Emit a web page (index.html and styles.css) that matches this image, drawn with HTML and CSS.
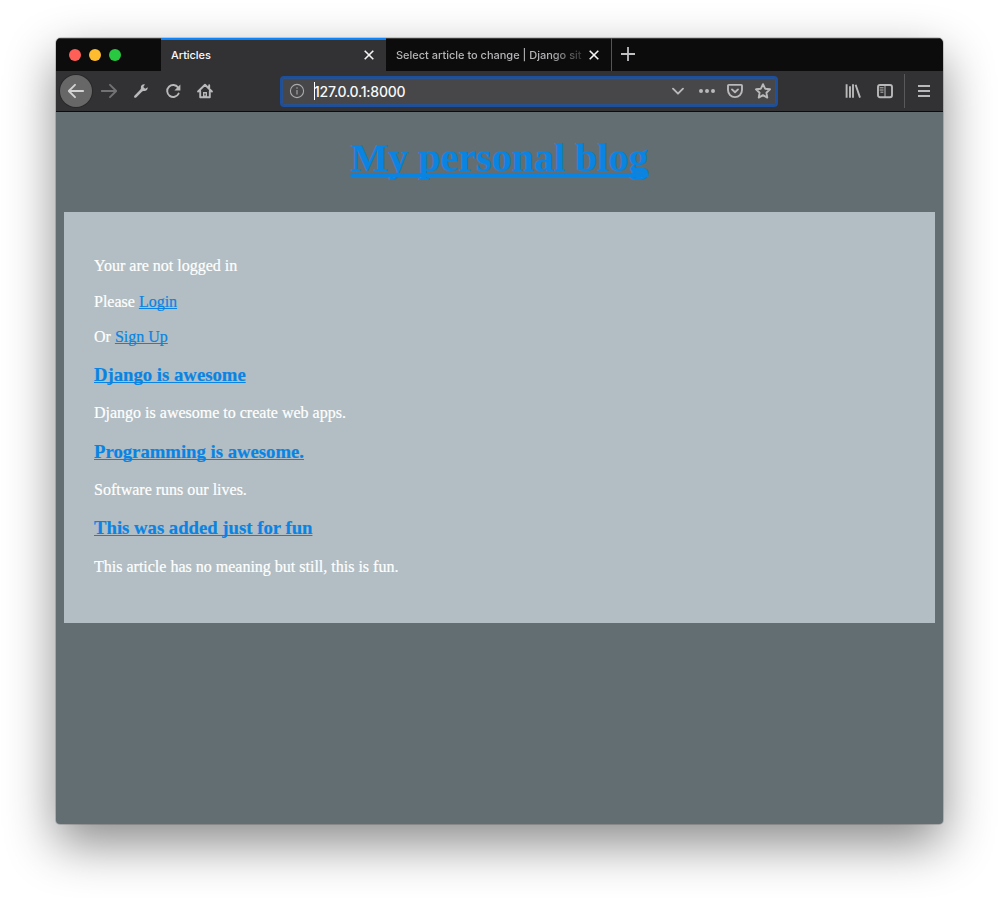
FILE: index.html
```html
<!DOCTYPE html>
<html lang="en">
<head>
<meta charset="utf-8">
<title>Articles</title>
<link rel="stylesheet" href="styles.css">
</head>
<body>
<div class="window">
  <div class="tabbar">
    <div class="lights"><i class="red"></i><i class="yellow"></i><i class="green"></i></div>
    <div class="tab active"><span class="label">Articles</span><svg class="close" viewBox="0 0 10 10"><path d="M.7.7l8.6 8.6M9.3.7L.7 9.3"/></svg></div>
    <div class="tab"><span class="label faded">Select article to change | Django sit</span><svg class="close" viewBox="0 0 10 10"><path d="M.7.7l8.6 8.6M9.3.7L.7 9.3"/></svg></div>
    <svg class="plus" viewBox="0 0 14 14"><path d="M7 0v14M0 7h14"/></svg>
  </div>
  <div class="toolbar">
    <div class="back"><svg class="icon" viewBox="0 0 16 16"><path d="M15.200 8H1M7 1.800L.8 8 7 14.200"/></svg></div>
    <svg class="icon forward" viewBox="0 0 16 16"><path d="M.6 8h14.600M9 1.800L15.200 8 9 14.200"/></svg>
    <svg class="icon" viewBox="0 0 16 16"><path class="solid" d="M14.700 4.200l-2.500 1.600-1.900-1.700L11.900 1.400C9.500.900 7.500 2.700 7.900 5.100c.1.700-.1 1.100-.5 1.500L1.400 12.700c-1.100 1.200.6 2.900 1.800 1.800L9.200 8.500c.4-.4.900-.6 1.500-.5 2.400.4 4.300-1.400 4-3.800z"/></svg>
    <svg class="icon" viewBox="0 0 16 16"><path d="M13.100 4.500A6 6 0 1 0 13.600 10.600"/><path class="solid" d="M15.400 1.500v6H9.400z"/></svg>
    <svg class="icon" viewBox="0 0 16 16"><path d="M1.100 8.500L8 1.700l6.900 6.800M3.200 8v6.300h9.600V8M12.200 2.300v2.500"/><path class="solid" d="M6 9h4v5.500H6z"/><path class="hole" d="M8 10.500v2"/></svg>
    <div class="url">
      <svg class="info" viewBox="0 0 16 16"><circle cx="8" cy="8" r="6.600"/><path d="M8 7v4.500M8 4.300v1.500"/></svg>
      <span class="address">127.0.0.1:8000</span>
      <svg class="icon chevron" viewBox="0 0 16 16"><path d="M3 5.700L8 10.700l5-5"/></svg>
      <svg class="icon dots" viewBox="0 0 16 16"><path class="solid" d="M0 8a2 2 0 1 0 4 0 2 2 0 0 0-4 0m6 0a2 2 0 1 0 4 0 2 2 0 0 0-4 0m6 0a2 2 0 1 0 4 0 2 2 0 0 0-4 0"/></svg>
      <svg class="icon" viewBox="0 0 16 16"><path d="M1.800 1.900h12.400q.8 0 .8.800v4.400a7 7 0 0 1-14 0V2.700q0-.8.800-.8zM5 6.400L8 9.300l3-2.900"/></svg>
      <svg class="icon" viewBox="0 0 16 16"><path d="M8 1.200l2.100 4.500 4.900.6-3.600 3.400.9 4.900L8 12.200l-4.300 2.400.9-4.900L1 6.300l4.900-.6z"/></svg>
    </div>
    <svg class="icon library" viewBox="0 0 16 16"><path d="M1.600 1.200v13.600M5 3.200v11.600M8 1.200v13.600M10.600 1.800L15 14.600"/></svg>
    <svg class="icon" viewBox="0 0 16 16"><rect x="1" y="2" width="14" height="12.200" rx="2"/><path class="thin" d="M8 2v12.200M3 4.800h3.200M3 7h3.200M3.800 9.200H6"/></svg>
    <div class="rule"></div>
    <svg class="icon menu" viewBox="0 0 16 16"><path d="M2 3h12M2 8h12M2 13h12"/></svg>
  </div>
  <main class="page">
    <h1><a href="#">My personal blog</a></h1>
    <div class="content">
      <p>Your are not logged in</p>
      <p>Please <a href="#">Login</a></p>
      <p>Or <a href="#">Sign Up</a></p>
      <h3><a href="#">Django is awesome</a></h3>
      <p>Django is awesome to create web apps.</p>
      <h3><a href="#">Programming is awesome.</a></h3>
      <p>Software runs our lives.</p>
      <h3><a href="#">This was added just for fun</a></h3>
      <p>This article has no meaning but still, this is fun.</p>
    </div>
  </main>
</div>
</body>
</html>
```
FILE: styles.css
```css
* { box-sizing: border-box; }
body { margin: 0; height: 898px; padding: 38px 56px; background: #fff; overflow: hidden; }
.window {
  width: 887px; height: 786px; display: flex; flex-direction: column;
  border-radius: 5px 5px 4px 4px; overflow: hidden; background: #636e72;
  box-shadow: 0 0 0 1px rgba(0,0,0,.16), 0 20px 50px rgba(0,0,0,.46);
  font-family: Inter, "Liberation Sans", sans-serif;
}
.tabbar { height: 33px; flex: none; background: #0c0c0d; display: flex; align-items: stretch; box-shadow: inset 0 1px #3c3c3d; }
.lights { width: 105px; padding-left: 13px; display: flex; gap: 8px; align-items: center; }
.lights i { width: 12px; height: 12px; border-radius: 50%; margin-top: 1px; }
.red { background: #ff5f57; }
.yellow { background: #febc2e; }
.green { background: #28c840; }
.tab {
  width: 225px; padding: 1px 12px 0 10px; display: flex; align-items: center; justify-content: space-between;
  font-size: 11px; font-weight: 500; color: #b5b5b7;
}
.tab + .tab { width: 226px; border-right: 1px solid #555557; }
.active { background: #323234; color: #f9f9fa; border-top: 2px solid #0a84ff; padding-top: 0; }
.label { white-space: nowrap; padding-bottom: 1px; letter-spacing: 0; }
.active .label { letter-spacing: -.05px; padding-bottom: 2px; }
.active .close { margin-bottom: 1px; }
.faded { letter-spacing: -.01px; mask-image: linear-gradient(to right, #000 155px, transparent 195px); }
svg { fill: none; flex: none; display: block; }
.close { width: 10px; height: 10px; stroke: #f4f4f5; stroke-width: 1.6; }
.plus { width: 14px; height: 14px; margin: 9px 0 0 9px; stroke: #c0c0c2; stroke-width: 1.8; }
.toolbar {
  height: 41px; flex: none; background: #323234; border-bottom: 1px solid #0c0c0d;
  padding-left: 4px; display: flex; align-items: center; gap: 16px;
}
.icon { width: 16px; height: 16px; stroke: #b9b9ba; stroke-width: 1.9; stroke-linejoin: round; stroke-linecap: round; }
.solid { fill: #b9b9ba; stroke: none; }
.hole { stroke: #323234; stroke-width: 1.3; stroke-linecap: butt; }
.thin { stroke-width: 1; }
.back {
  width: 32px; height: 32px; border-radius: 50%; background: #676768; box-shadow: 0 0 0 1px #29292a;
  display: flex; align-items: center; justify-content: center; margin-right: -7px;
}
.back .icon { stroke: #d2d2d3; }
.icon.forward { stroke: #727274; }
.url {
  width: 498px; height: 31px; margin-left: 51px; border: 2px solid #1c4f9d; border-radius: 4px;
  background: #474749; box-shadow: inset 0 0 0 1px #28518d;
  display: flex; align-items: center; padding: 0 5px 0 7px; gap: 12px;
}
.info { width: 16px; height: 16px; stroke: #aaaaac; stroke-width: 1.1; }
.address {
  flex: 1; margin-left: -3px; padding: 1px 0 0; border-left: 1px solid #fff; text-indent: -1px;
  color: #f9f9fa; font-size: 14px; line-height: 17px; letter-spacing: -.25px; font-weight: 500;
}
.chevron { margin-right: 1px; }
.library { margin-left: 51px; stroke-linecap: butt; }
.menu { stroke-linecap: butt; }
.rule { width: 1px; height: 34px; background: #59595b; margin: 0 -5px; }
.page {
  flex: 1; padding: 0 8px; font-family: "Liberation Serif", serif; font-size: 16px;
  color: #fff; -webkit-text-stroke: .2px;
}
a { color: #0984e3; text-decoration: underline; text-decoration-skip-ink: none; }
h1 { margin: 0; height: 100px; padding-top: 23px; font-size: 40px; line-height: 46px; text-align: center; }
.content { height: 411px; padding: 45px 30px; background: #b2bec3; }
p { margin: 17.5px 0; line-height: 18px; }
h3 { margin: 18.3px 0 18.1px; font-size: 18.72px; line-height: 22px; }
h3:last-of-type { margin-bottom: 18.8px; }
.content p:first-child { margin-top: 0; }
```
